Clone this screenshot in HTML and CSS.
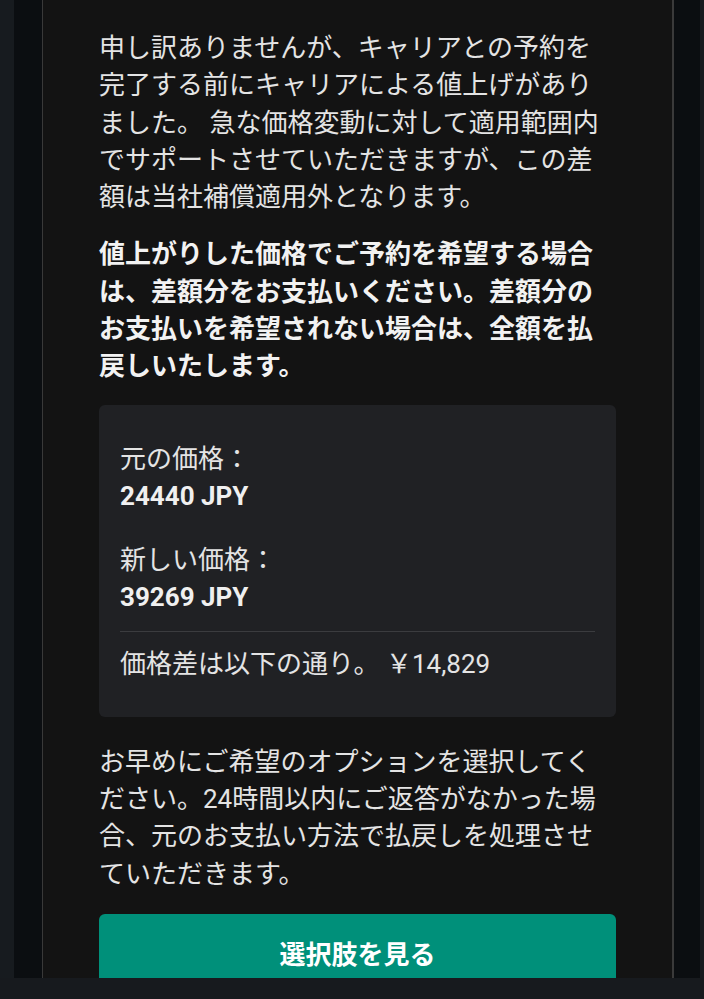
FILE: index.html
```html
<!DOCTYPE html>
<html lang="ja">
<head>
<meta charset="utf-8">
<title>価格変更</title>
<link rel="stylesheet" href="styles.css">
</head>
<body>
<div class="screen">
  <main class="panel">
    <p class="msg">申し訳ありませんが、キャリアとの予約を完了する前にキャリアによる値上げがありました。 急な価格変動に対して適用範囲内でサポートさせていただきますが、この差額は当社補償適用外となります。</p>
    <p class="msg strong">値上がりした価格でご予約を希望する場合は、差額分をお支払いください。差額分のお支払いを希望されない場合は、全額を払戻しいたします。</p>
    <section class="price-box">
      <div class="price-item">
        <div class="price-label">元の価格：</div>
        <div class="price-value">24440 JPY</div>
      </div>
      <div class="price-item">
        <div class="price-label">新しい価格：</div>
        <div class="price-value">39269 JPY</div>
      </div>
      <div class="divider"></div>
      <div class="price-diff">価格差は以下の通り。 ￥14,829</div>
    </section>
    <p class="msg note">お早めにご希望のオプションを選択してください。24時間以内にご返答がなかった場合、元のお支払い方法で払戻しを処理させていただきます。</p>
    <button class="cta" type="button">選択肢を見る</button>
  </main>
</div>
<div class="bottom-bar"></div>
</body>
</html>
```

FILE: styles.css
```css
* { box-sizing: border-box; }

html, body {
  margin: 0;
  padding: 0;
}

body {
  background: #171b1f;
  font-family: Roboto, "Noto Sans CJK JP", sans-serif;
  font-size: 26px;
  line-height: 37.3px;
  color: #e4e4e4;
  width: 704px;
  height: 999px;
  overflow: hidden;
}

.screen {
  display: flex;
  height: 978px;
  overflow: hidden;
  margin: 0 4px 0 14px;
  padding: 0 26px 0 28px;
  background: #0b0e11;
}

.panel {
  flex: 1;
  background: #131313;
  border-left: 1px solid #393939;
  border-right: 2px solid #3a3a3a;
  padding: 30px 56px 0 56px;
}

.msg {
  margin: 0;
}

.strong {
  margin-top: 20px;
  font-weight: 700;
  color: #f2f2f2;
}

.note {
  margin-top: 27px;
}

.price-box {
  margin-top: 19px;
  background: #202124;
  border-radius: 6px;
  padding: 36px 21px 34px;
  line-height: 37px;
}

.price-item + .price-item {
  margin-top: 27px;
}

.price-value {
  font-weight: 700;
  color: #f0f0f0;
}

.divider {
  height: 1px;
  background: #3b3c3f;
  margin: 15px 0 14px;
}

.cta {
  display: block;
  width: 100%;
  height: 78px;
  margin-top: 21px;
  border: 0;
  border-radius: 6px;
  background: #00907a;
  color: #ffffff;
  font-family: inherit;
  font-size: 26px;
  font-weight: 700;
  line-height: 37px;
  padding: 5px 0 0;
}

.bottom-bar {
  height: 21px;
  background: #171a1e;
}
```
